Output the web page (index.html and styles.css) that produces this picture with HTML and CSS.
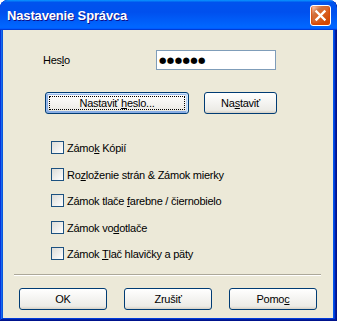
FILE: index.html
```html
<!DOCTYPE html>
<html lang="sk">
<head>
<meta charset="utf-8">
<title>Nastavenie Správca</title>
<link rel="stylesheet" href="styles.css">
</head>
<body>
<div class="window">
  <div class="titlebar">
    <span class="title">Nastavenie Správca</span>
    <button class="close" aria-label="Zavrieť">
      <svg width="13" height="13" viewBox="0 0 13 13"><path d="M2.5 2.5 L10.5 10.5 M10.5 2.5 L2.5 10.5" stroke="#fff" stroke-width="2.4" stroke-linecap="square" fill="none"/></svg>
    </button>
  </div>
  <div class="client">
    <div class="pw-row">
      <span class="pw-label">Hes<u>l</u>o</span>
      <div class="pw-field">●●●●●●</div>
    </div>
    <div class="top-buttons">
      <button class="btn btn-default btn-wide"><span class="focus">Nastaviť <u>h</u>eslo...</span></button>
      <button class="btn btn-set">Na<u>s</u>taviť</button>
    </div>
    <div class="checks">
      <label class="check"><span class="box"></span><span>Zámo<u>k</u> Kópií</span></label>
      <label class="check"><span class="box"></span><span>Ro<u>z</u>loženie strán &amp; Zámok mierky</span></label>
      <label class="check"><span class="box"></span><span>Zámok tlače <u>f</u>arebne / čiernobielo</span></label>
      <label class="check"><span class="box"></span><span>Zámok vo<u>d</u>otlače</span></label>
      <label class="check"><span class="box"></span><span>Zámok <u>T</u>lač hlavičky a päty</span></label>
    </div>
    <div class="separator"></div>
    <div class="bottom-buttons">
      <button class="btn btn-bottom">OK</button>
      <button class="btn btn-bottom">Zrušiť</button>
      <button class="btn btn-bottom">Pomo<u>c</u></button>
    </div>
  </div>
</div>
</body>
</html>
```
FILE: styles.css
```css
html, body {
  margin: 0;
  padding: 0;
  background: #ffffff;
}
body {
  font-family: "Liberation Sans", Arial, sans-serif;
  font-size: 11px;
  letter-spacing: -0.25px;
  color: #000;
}
.window {
  width: 337px;
  height: 321px;
  display: flex;
  flex-direction: column;
  border-radius: 8px 8px 0 0;
  overflow: hidden;
  background: #0055ea;
  box-shadow: inset -1px -1px #00138c, inset 1px 0 #0831d9, inset -2px -2px #001ea0, inset 2px 0 #166aee, inset -3px -3px #003bda, inset 3px 0 #0855dd;
}
.titlebar {
  height: 30px;
  flex: none;
  display: flex;
  align-items: center;
  justify-content: space-between;
  padding: 0 6px 0 7px;
  box-sizing: border-box;
  background: linear-gradient(180deg, #0997ff, #0053ee 8%, #0050ee 40%, #06f 88%, #06f 93%, #005bff 95%, #003dd7 96%, #003dd7);
  border-radius: 8px 8px 0 0;
}
.title {
  font-family: "Liberation Sans", Arial, sans-serif;
  font-weight: bold;
  font-size: 13px;
  letter-spacing: -0.15px;
  color: #fff;
  text-shadow: 1px 1px #0f1089;
  margin-top: 1px;
}
.close {
  width: 21px;
  height: 21px;
  padding: 0;
  margin: 0;
  border: 1px solid #fff;
  border-radius: 3px;
  box-sizing: border-box;
  display: flex;
  align-items: center;
  justify-content: center;
  background: radial-gradient(circle at 90% 90%, #cc4600 0%, #dc6527 55%, #cd7546 70%, #ffccb2 90%, #fff 100%);
  box-shadow: inset 0 -1px 2px 1px #da4600;
  margin-top: 1px;
}
.close svg { display: block; }
.client {
  flex: 1;
  margin: 0 4px 3px 3px;
  background: #ece9d8;
  display: flex;
  flex-direction: column;
  padding-top: 20px;
}
.pw-row {
  display: flex;
  align-items: center;
  height: 20px;
  padding-left: 40px;
}
.pw-label {
  width: 113px;
}
.pw-field {
  width: 120px;
  height: 20px;
  box-sizing: border-box;
  border: 1px solid #7f9db9;
  background: #fff;
  font-family: "DejaVu Sans", sans-serif;
  font-size: 8.5px;
  letter-spacing: 0.4px;
  line-height: 18px;
  padding-left: 2px;
  color: #000;
}
.top-buttons {
  display: flex;
  gap: 15px;
  margin-top: 22px;
  padding-left: 42px;
}
.btn {
  height: 22px;
  box-sizing: border-box;
  border: 1px solid #003c74;
  border-radius: 3px;
  background: linear-gradient(180deg, #fff, #ecebe6 86%, #d6d0c5);
  font-family: "Liberation Sans", Arial, sans-serif;
  font-size: 11px;
  letter-spacing: -0.25px;
  color: #000;
  padding: 0;
  display: flex;
  align-items: center;
  justify-content: center;
}
.btn-default {
  box-shadow: inset -1px 1px #cee7ff, inset 1px 2px #98b8ea, inset -2px 2px #bcd4f6, inset 1px -1px #89ade4, inset 2px -2px #89ade4;
  position: relative;
}
.btn-default .focus::after {
  content: "";
  position: absolute;
  left: 3px;
  top: 3px;
  right: 3px;
  bottom: 3px;
  border: 1px dotted #000;
}
.btn-wide { width: 144px; }
.btn-set { width: 73px; }
.checks {
  display: grid;
  grid-template-rows: 27px 26px 27px 26px 13px;
  margin-top: 27px;
  padding-left: 48px;
}
.check {
  display: flex;
  align-items: center;
  height: 13px;
  gap: 3px;
}
.box {
  width: 13px;
  height: 13px;
  box-sizing: border-box;
  border: 1px solid #1c5180;
  background: linear-gradient(135deg, #dcdcd7, #fff);
  flex: none;
}
.separator {
  margin: 14px 12px 0 11px;
  height: 1px;
  background: #aca899;
  border-bottom: 1px solid #fff;
}
.bottom-buttons {
  display: flex;
  gap: 17px;
  padding-left: 16px;
  margin-top: 12px;
}
.btn-bottom { width: 88px; }
```
